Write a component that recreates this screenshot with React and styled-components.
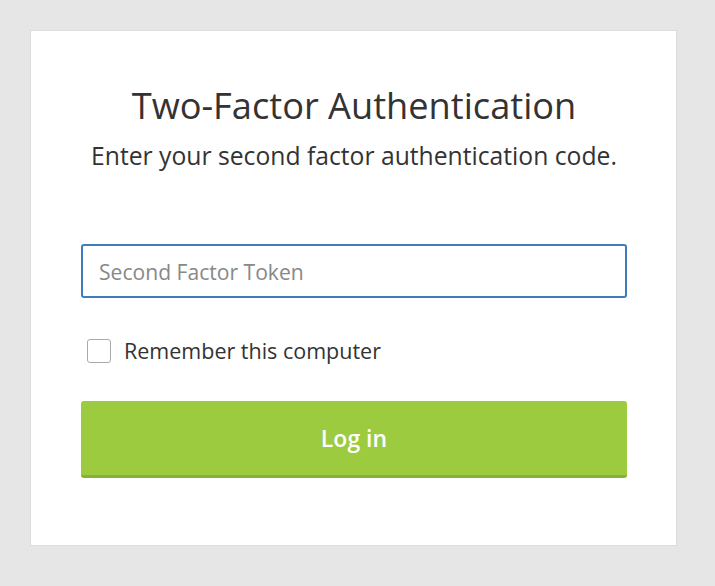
import React from "react";
import styled, { createGlobalStyle } from "styled-components";

const GlobalStyle = createGlobalStyle`
  html, body {
    margin: 0;
    padding: 0;
    background: #e6e6e6;
    font-family: "Open Sans", "Liberation Sans", sans-serif;
  }
`;

const Page = styled.div`
  padding: 30px 38px 40px 30px;
`;

const Card = styled.div`
  width: 647px;
  height: 516px;
  background: #fff;
  border: 1px solid #dcdcdc;
  padding: 0 49px 0 50px;
  box-sizing: border-box;
  display: flex;
  flex-direction: column;
`;

const Title = styled.h1`
  margin: 50px 0 0;
  font-size: 36.2px;
  font-weight: 400;
  line-height: 48px;
  color: #333;
  text-align: center;
`;

const Subtitle = styled.p`
  margin: 11px 0 0;
  font-size: 24.7px;
  line-height: 32px;
  color: #333;
  text-align: center;
  white-space: nowrap;
`;

const TokenInput = styled.input`
  margin-top: 72px;
  height: 54px;
  border: 2px solid #3d7dbf;
  border-radius: 3px;
  padding: 0 16px;
  box-sizing: border-box;
  font-family: inherit;
  font-size: 21.1px;
  color: #333;
  outline: none;

  &::placeholder {
    color: #888;
  }
`;

const CheckRow = styled.label`
  margin-top: 38px;
  display: flex;
  align-items: center;
  gap: 13px;
  padding-left: 6px;
  font-size: 21.5px;
  color: #333;
  cursor: pointer;
`;

const Box = styled.span`
  width: 24px;
  height: 24px;
  border: 1px solid #aaa;
  border-radius: 3px;
  box-sizing: border-box;
  background: #fff;
`;

const LoginButton = styled.button`
  margin-top: 36px;
  height: 77px;
  border: none;
  border-bottom: 3px solid #87b132;
  border-radius: 3px;
  background: #9ccb3f;
  color: #fff;
  font-family: inherit;
  font-size: 23px;
  font-weight: 600;
  cursor: pointer;
`;

export default function App() {
  return (
    <>
      <GlobalStyle />
      <Page>
        <Card>
          <Title>Two-Factor Authentication</Title>
          <Subtitle>Enter your second factor authentication code.</Subtitle>
          <TokenInput placeholder="Second Factor Token" />
          <CheckRow>
            <Box />
            Remember this computer
          </CheckRow>
          <LoginButton>Log in</LoginButton>
        </Card>
      </Page>
    </>
  );
}
